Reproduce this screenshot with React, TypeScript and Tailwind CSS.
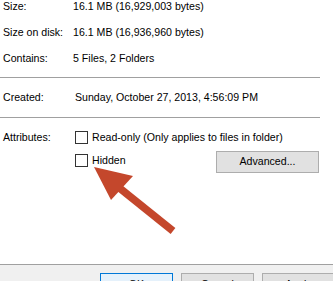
import React from 'react';

const rows = [
  { label: 'Size:', value: '16.1 MB (16,929,003 bytes)' },
  { label: 'Size on disk:', value: '16.1 MB (16,936,960 bytes)' },
  { label: 'Contains:', value: '5 Files, 2 Folders' },
];

const Checkbox = ({ label }: { label: string }) => (
  <label className="flex items-center h-[13px]">
    <span className="w-[13px] h-[13px] border border-[#333333] bg-white shrink-0" />
    <span className="ml-[4px] leading-[13px]">{label}</span>
  </label>
);

const Arrow = () => (
  <svg className="absolute left-0 top-0 pointer-events-none" width="333" height="281">
    <line x1="173" y1="231" x2="112" y2="182" stroke="#c4472c" strokeWidth="7.5" />
    <polygon points="94,167 133,176 111,200" fill="#c4472c" />
  </svg>
);

export default function App() {
  return (
    <div
      className="relative w-[333px] h-[281px] overflow-hidden bg-white text-[10.6px] text-black"
      style={{ fontFamily: '"Liberation Sans", Arial, sans-serif' }}
    >
      <div className="h-[264px] pl-[3px] flex flex-col">
        <div className="flex flex-col gap-[13px]">
          {rows.map((r) => (
            <div key={r.label} className="flex leading-[13px]">
              <span className="w-[70px]">{r.label}</span>
              <span>{r.value}</span>
            </div>
          ))}
        </div>
        <div className="mt-[12px] w-[320px] -ml-[3px] border-t border-[#a0a0a0]" />
        <div className="mt-[13px] flex leading-[13px]">
          <span className="w-[72px]">Created:</span>
          <span>Sunday, October 27, 2013, 4:56:09 PM</span>
        </div>
        <div className="mt-[13px] w-[320px] -ml-[3px] border-t border-[#a0a0a0]" />
        <div className="mt-[13px] flex">
          <span className="w-[72px] leading-[13px]">Attributes:</span>
          <div className="flex flex-col">
            <Checkbox label="Read-only (Only applies to files in folder)" />
            <div className="mt-[10px] flex items-start">
              <div className="w-[141px]">
                <Checkbox label="Hidden" />
              </div>
              <button className="-mt-[3px] w-[103px] h-[22px] bg-[#e1e1e1] border border-[#adadad]">
                Advanced...
              </button>
            </div>
          </div>
        </div>
      </div>
      <div className="h-[17px] bg-[#f0f0f0] border-t border-[#a0a0a0] flex pl-[100px] gap-[8px] pt-[8px]">
        <button className="w-[73px] h-[23px] shrink-0 bg-[#e5f1fb] border border-[#0078d7] leading-[15px]">OK</button>
        <button className="w-[73px] h-[23px] shrink-0 bg-[#e1e1e1] border border-[#adadad] leading-[15px]">Cancel</button>
        <button className="w-[73px] h-[23px] shrink-0 bg-[#e1e1e1] border border-[#adadad] leading-[15px]">Apply</button>
      </div>
      <Arrow />
    </div>
  );
}
